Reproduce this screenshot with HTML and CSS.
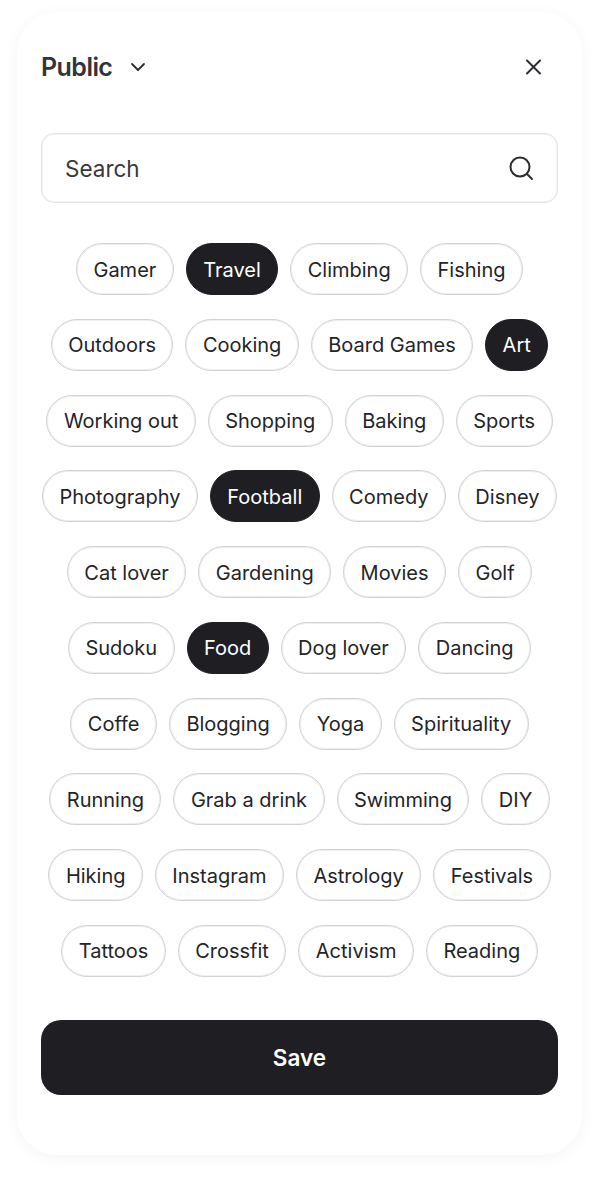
FILE: index.html
```html
<!DOCTYPE html>
<html lang="en">
<head>
<meta charset="utf-8">
<title>Public</title>
<link rel="stylesheet" href="styles.css">
</head>
<body>
<main class="card">
  <header class="head">
    <div class="title"><span>Public</span>
      <svg class="chev" width="24" height="24" viewBox="0 0 24 24" fill="none"><path d="M6 9l6 6 6-6" stroke="#2b2b30" stroke-width="1.800" stroke-linecap="round" stroke-linejoin="round"/></svg>
    </div>
    <svg class="close" width="24" height="24" viewBox="0 0 24 24" fill="none"><path d="M6 5.500l13 13M19 5.500l-13 13" stroke="#2b2b30" stroke-width="2" stroke-linecap="round"/></svg>
  </header>
  <div class="search"><span>Search</span>
    <svg width="28" height="28" viewBox="0 0 28 28" fill="none"><circle cx="13" cy="13" r="9.500" stroke="#2b2b30" stroke-width="2"/><path d="M20 20l5 5" stroke="#2b2b30" stroke-width="2" stroke-linecap="round"/></svg>
  </div>
  <div class="tags">
    <div class="row"><span class="tag">Gamer</span><span class="tag on">Travel</span><span class="tag">Climbing</span><span class="tag">Fishing</span></div>
    <div class="row"><span class="tag">Outdoors</span><span class="tag">Cooking</span><span class="tag">Board Games</span><span class="tag on">Art</span></div>
    <div class="row"><span class="tag">Working out</span><span class="tag">Shopping</span><span class="tag">Baking</span><span class="tag">Sports</span></div>
    <div class="row"><span class="tag">Photography</span><span class="tag on">Football</span><span class="tag">Comedy</span><span class="tag">Disney</span></div>
    <div class="row"><span class="tag">Cat lover</span><span class="tag">Gardening</span><span class="tag">Movies</span><span class="tag">Golf</span></div>
    <div class="row"><span class="tag">Sudoku</span><span class="tag on">Food</span><span class="tag">Dog lover</span><span class="tag">Dancing</span></div>
    <div class="row"><span class="tag">Coffe</span><span class="tag">Blogging</span><span class="tag">Yoga</span><span class="tag">Spirituality</span></div>
    <div class="row"><span class="tag">Running</span><span class="tag">Grab a drink</span><span class="tag">Swimming</span><span class="tag">DIY</span></div>
    <div class="row"><span class="tag">Hiking</span><span class="tag">Instagram</span><span class="tag">Astrology</span><span class="tag">Festivals</span></div>
    <div class="row"><span class="tag">Tattoos</span><span class="tag">Crossfit</span><span class="tag">Activism</span><span class="tag">Reading</span></div>
  </div>
  <button class="save">Save</button>
</main>
</body>
</html>
```

FILE: styles.css
```css
* { box-sizing: border-box; }
html, body { margin: 0; }
body {
  width: 600px;
  height: 1179px;
  background: #fff;
  font-family: Inter, sans-serif;
  color: #242428;
  padding: 12px 18px 24px 17px;
}
.card {
  height: 1143px;
  border-radius: 40px;
  background: #fff;
  box-shadow: 0 3px 16px rgba(30, 30, 35, 0.045);
  padding: 0 24px;
}
.head {
  display: flex;
  align-items: center;
  justify-content: space-between;
  height: 121px;
  padding: 0 13px 11px 0;
}
.title {
  display: flex;
  align-items: center;
  gap: 14px;
  font-size: 25px;
  font-weight: 600;
  letter-spacing: -0.55px;
  color: #333338;
}
.search {
  height: 70px;
  border: 1px solid #e2e4e6;
  box-shadow: inset 0 0 0 1px #f3f4f5;
  border-radius: 13px;
  padding: 0 22px 0 23px;
  display: flex;
  align-items: center;
  justify-content: space-between;
  font-size: 22.500px;
  color: #38383d;
}
.tags {
  margin-top: 40px;
  display: flex;
  flex-direction: column;
  gap: 23.750px;
}
.row {
  display: flex;
  justify-content: center;
  gap: 12px;
}
.tag {
  height: 52px;
  padding: 1px 16.450px 0;
  border: 1px solid #d0d2d4;
  box-shadow: inset 0 0 0 1px #eeeff0;
  border-radius: 26px;
  display: flex;
  align-items: center;
  font-size: 20px;
  white-space: nowrap;
}
.tag.on {
  background: #1e1e23;
  border-color: #1e1e23;
  box-shadow: none;
  color: #fff;
}
.save {
  display: block;
  width: 100%;
  height: 75px;
  margin-top: 43.500px;
  border: 0;
  border-radius: 20px;
  background: #1e1e23;
  color: #fff;
  font: 600 22.500px Inter, sans-serif;
}
```
